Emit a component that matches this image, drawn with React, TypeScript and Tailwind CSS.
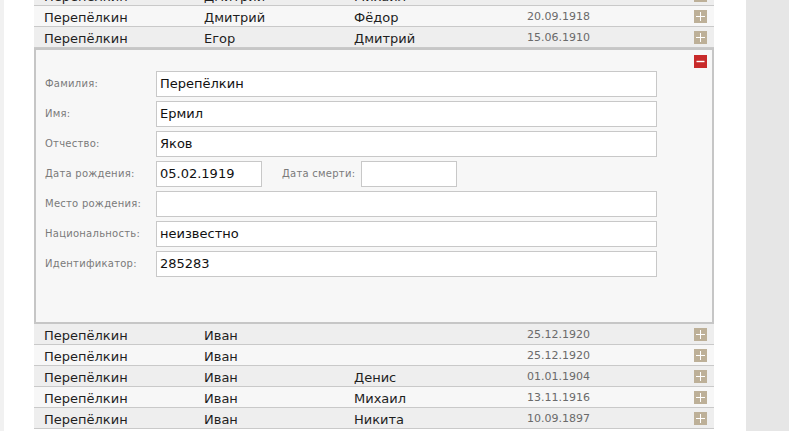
import React from 'react';

interface Person {
  surname: string;
  name: string;
  patronymic: string;
  birth: string;
}

const topRows: Person[] = [
  { surname: 'Перепёлкин', name: 'Дмитрий', patronymic: 'Михаил', birth: '26.12.1913' },
  { surname: 'Перепёлкин', name: 'Дмитрий', patronymic: 'Фёдор', birth: '20.09.1918' },
  { surname: 'Перепёлкин', name: 'Егор', patronymic: 'Дмитрий', birth: '15.06.1910' },
];

const bottomRows: Person[] = [
  { surname: 'Перепёлкин', name: 'Иван', patronymic: '', birth: '25.12.1920' },
  { surname: 'Перепёлкин', name: 'Иван', patronymic: '', birth: '25.12.1920' },
  { surname: 'Перепёлкин', name: 'Иван', patronymic: 'Денис', birth: '01.01.1904' },
  { surname: 'Перепёлкин', name: 'Иван', patronymic: 'Михаил', birth: '13.11.1916' },
  { surname: 'Перепёлкин', name: 'Иван', patronymic: 'Никита', birth: '10.09.1897' },
];

const PlusIcon = () => (
  <span className="w-[13px] h-[13px] bg-[#bdb098] flex items-center justify-center">
    <svg width="13" height="13" viewBox="0 0 13 13">
      <path d="M6.5 2v9M2 6.5h9" stroke="#fff" strokeWidth="1" shapeRendering="crispEdges" />
    </svg>
  </span>
);

const MinusIcon = () => (
  <span className="w-[13px] h-[13px] bg-[#c82a2a] flex items-center justify-center">
    <svg width="13" height="13" viewBox="0 0 13 13">
      <path d="M2.5 6.5h8" stroke="#fff" strokeWidth="1.4" />
    </svg>
  </span>
);

const Row: React.FC<{ p: Person; shaded: boolean; className?: string }> = ({ p, shaded, className }) => (
  <div
    className={`h-[21px] flex items-center pl-[10px] pt-[3px] border-b border-[#c9c9c9] text-[13px] text-[#1e1e1e] ${
      shaded ? 'bg-[#eeeeee]' : 'bg-[#f7f7f7]'
    } ${className || ''}`}
  >
    <div className="w-[160px] shrink-0">{p.surname}</div>
    <div className="w-[150px] shrink-0">{p.name}</div>
    <div className="w-[173px] shrink-0">{p.patronymic}</div>
    <div className="w-[167px] shrink-0 text-[11px] text-[#6a6a6a]">{p.birth}</div>
    <div className="-mt-[2px]">
      <PlusIcon />
    </div>
  </div>
);

const labelCls = 'shrink-0 whitespace-nowrap text-[10px] text-[#7a7a7a] tracking-[0.25px] -mt-[2px]';

const Field: React.FC<{ label: string; value?: string }> = ({ label, value }) => (
  <div className="flex items-center h-[26px] mb-[4px]">
    <div className={`w-[111px] ${labelCls}`}>{label}</div>
    <div className="w-[501px] h-[26px] bg-white border border-[#c8c8c8] flex items-center pl-[3px] text-[13px] text-[#111]">
      {value}
    </div>
  </div>
);

export default function App() {
  return (
    <div
      className="w-[789px] h-[431px] overflow-hidden flex bg-[#e6e6e6]"
      style={{ fontFamily: '"DejaVu Sans", Verdana, sans-serif' }}
    >
      <div className="w-[4px] bg-[#f1f1f1] shrink-0" />
      <div className="w-[742px] shrink-0 bg-white pl-[30px]">
        <div className="w-[680px]">
          <Row p={topRows[0]} shaded className="mt-[-15px]" />
          <Row p={topRows[1]} shaded={false} />
          <Row p={topRows[2]} shaded />

          <div className="relative h-[276px] border-2 border-[#c6c6c6] bg-[#f7f7f7] pt-[21px] pl-[9px]">
            <div className="absolute top-[5px] right-[5px]">
              <MinusIcon />
            </div>
            <Field label="Фамилия:" value="Перепёлкин" />
            <Field label="Имя:" value="Ермил" />
            <Field label="Отчество:" value="Яков" />
            <div className="flex items-center h-[26px] mb-[4px]">
              <div className={`w-[111px] ${labelCls}`}>Дата рождения:</div>
              <div className="w-[106px] h-[26px] bg-white border border-[#c8c8c8] flex items-center pl-[3px] text-[13px] text-[#111]">
                05.02.1919
              </div>
              <div className={`ml-[20px] w-[79px] ${labelCls}`}>Дата смерти:</div>
              <div className="w-[96px] h-[26px] bg-white border border-[#c8c8c8]" />
            </div>
            <Field label="Место рождения:" />
            <Field label="Национальность:" value="неизвестно" />
            <Field label="Идентификатор:" value="285283" />
          </div>

          {bottomRows.map((p, i) => (
            <Row key={i} p={p} shaded={i % 2 === 0} />
          ))}
        </div>
      </div>
    </div>
  );
}
